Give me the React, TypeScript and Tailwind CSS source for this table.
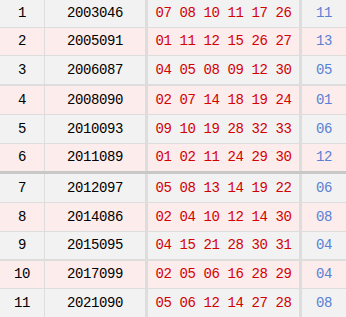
const ROWS = [
  { no: "1", issue: "2003046", red: "07 08 10 11 17 26", blue: "11", h: "h-[27px]", sep: "border-b border-[#dddddd]" },
  { no: "2", issue: "2005091", red: "01 11 12 15 26 27", blue: "13", h: "h-[27px]", sep: "border-b border-[#dddddd]" },
  { no: "3", issue: "2006087", red: "04 05 08 09 12 30", blue: "05", h: "h-[28px]", sep: "border-b-2 border-[#dddddd]" },
  { no: "4", issue: "2008090", red: "02 07 14 18 19 24", blue: "01", h: "h-[28px]", sep: "border-b border-[#dddddd]" },
  { no: "5", issue: "2010093", red: "09 10 19 28 32 33", blue: "06", h: "h-[28px]", sep: "border-b border-[#dddddd]" },
  { no: "6", issue: "2011089", red: "01 02 11 24 29 30", blue: "12", h: "h-[27px]", sep: "border-b-[3px] border-[#c8c8c8]" },
  { no: "7", issue: "2012097", red: "05 08 13 14 19 22", blue: "06", h: "h-[28px]", sep: "border-b border-[#dddddd]" },
  { no: "8", issue: "2014086", red: "02 04 10 12 14 30", blue: "08", h: "h-[28px]", sep: "border-b border-[#dddddd]" },
  { no: "9", issue: "2015095", red: "04 15 21 28 30 31", blue: "04", h: "h-[27px]", sep: "border-b-2 border-[#dddddd]" },
  { no: "10", issue: "2017099", red: "02 05 06 16 28 29", blue: "04", h: "h-[27px]", sep: "border-b border-[#dddddd]" },
  { no: "11", issue: "2021090", red: "05 06 12 14 27 28", blue: "08", h: "h-[28px]", sep: "border-b border-[#dddddd]" },
];

export default function App() {
  return (
    <div className="w-[346px] h-[317px] overflow-hidden bg-white font-['Liberation_Mono',monospace] text-[14px] tracking-[-0.4px]">
      {ROWS.map((r, i) => {
        const bg = i % 2 === 0 ? "bg-[#f2f2f2]" : "bg-[#fcecec]";
        return (
          <div key={r.no} className={`flex ${bg} ${r.sep}`}>
            <div className={`w-[45px] ${r.h} flex items-center justify-center border-r border-[#dddddd] text-black`}>
              {r.no}
            </div>
            <div className={`w-[103px] ${r.h} flex items-center justify-center border-r-[3px] border-[#dddddd] text-black`}>
              {r.issue}
            </div>
            <div className={`w-[154px] ${r.h} flex items-center justify-center border-r-[3px] border-[#dddddd] text-[#d40000] whitespace-pre`}>
              {r.red}
            </div>
            <div className={`w-[44px] ${r.h} flex items-center justify-center text-[#5a7fd4]`}>
              {r.blue}
            </div>
          </div>
        );
      })}
    </div>
  );
}
